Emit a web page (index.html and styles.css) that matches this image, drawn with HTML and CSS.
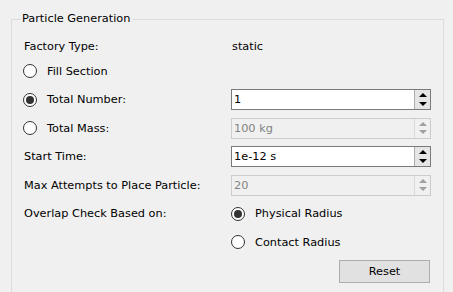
FILE: index.html
```html
<!DOCTYPE html>
<html>
<head>
  <link rel="stylesheet" href="styles.css">
</head>
<body>
  <fieldset class="group">
    <legend>Particle Generation</legend>

    <div class="rows">
      <div class="row first">
        <span class="label">Factory Type:</span>
        <span class="value">static</span>
      </div>

      <div class="row">
        <label class="radio"><span class="dot"></span>Fill Section</label>
      </div>

      <div class="row">
        <label class="radio"><span class="dot checked"></span>Total Number:</label>
        <div class="spin">
          <span class="spin-text">1</span>
          <span class="spin-btns"><span class="up"></span><span class="down"></span></span>
        </div>
      </div>

      <div class="row">
        <label class="radio"><span class="dot"></span>Total Mass:</label>
        <div class="spin disabled">
          <span class="spin-text">100 kg</span>
          <span class="spin-btns"><span class="up"></span><span class="down"></span></span>
        </div>
      </div>

      <div class="row">
        <span class="label">Start Time:</span>
        <div class="spin">
          <span class="spin-text">1e-12 s</span>
          <span class="spin-btns"><span class="up"></span><span class="down"></span></span>
        </div>
      </div>

      <div class="row">
        <span class="label">Max Attempts to Place Particle:</span>
        <div class="spin disabled">
          <span class="spin-text">20</span>
          <span class="spin-btns"><span class="up"></span><span class="down"></span></span>
        </div>
      </div>

      <div class="row">
        <span class="label">Overlap Check Based on:</span>
        <label class="radio"><span class="dot checked"></span>Physical Radius</label>
      </div>

      <div class="row">
        <span></span>
        <label class="radio"><span class="dot"></span>Contact Radius</label>
      </div>

      <div class="row">
        <span></span>
        <div class="actions">
          <button class="btn">Reset</button>
        </div>
      </div>
    </div>
  </fieldset>
</body>
</html>
```

FILE: styles.css
```css
* {
  margin: 0;
  padding: 0;
  box-sizing: border-box;
}

body {
  background: #f0f0f0;
  font-family: "DejaVu Sans", sans-serif;
  font-size: 11.3px;
  color: #000;
  overflow: hidden;
  height: 292px;
}

/* Group box */
.group {
  margin: 12px 0 0 11px;
  width: 433px;
  height: 280px;
  border: 1px solid #dcdcdc;
  border-bottom: none;
  padding: 0 0 0 11px;
}

.group legend {
  margin-left: -2px;
  padding: 0 3px 0 1px;
  line-height: 14px;
}

.rows {
  display: flex;
  flex-direction: column;
  gap: 6.5px;
  padding-top: 9px;
}

.row {
  display: grid;
  grid-template-columns: 208px 200px;
  height: 22px;
  align-items: center;
}

.row.first {
  margin-bottom: -3.5px;
}

.label {
  padding-left: 1px;
}

.value {
  padding-left: 1px;
}

/* Radio buttons */
.radio {
  display: flex;
  align-items: center;
  gap: 10px;
}

.dot {
  width: 14px;
  height: 14px;
  border: 1px solid #333;
  border-radius: 50%;
  background: #fff;
  display: flex;
  align-items: center;
  justify-content: center;
}

.dot.checked::after {
  content: "";
  width: 8px;
  height: 8px;
  border-radius: 50%;
  background: #333;
}

/* Spin boxes */
.spin {
  height: 21px;
  border: 1px solid #7a7a7a;
  background: #fff;
  display: flex;
  align-items: center;
  justify-content: space-between;
}

.spin-text {
  padding-left: 2px;
}

.spin-btns {
  width: 16px;
  height: 19px;
  border-left: 1px solid #adadad;
  display: flex;
  flex-direction: column;
  background: #e5e5e5;
  padding: 1px 0;
}

.spin-btns span {
  flex: 1;
  display: flex;
  align-items: center;
  justify-content: center;
}

.spin-btns .up::after {
  content: "";
  border-left: 4px solid transparent;
  border-right: 4px solid transparent;
  border-bottom: 4px solid #000;
}

.spin-btns .down::after {
  content: "";
  border-left: 4px solid transparent;
  border-right: 4px solid transparent;
  border-top: 4px solid #000;
}

.spin.disabled {
  border-color: #cccccc;
  background: #f0f0f0;
  color: #838383;
}

.spin.disabled .spin-btns {
  border-left-color: #dadada;
  background: #f0f0f0;
}

.spin.disabled .up::after {
  border-bottom-color: #a0a0a0;
}

.spin.disabled .down::after {
  border-top-color: #a0a0a0;
}

/* Button */
.actions {
  display: flex;
  justify-content: flex-end;
}

.btn {
  width: 91px;
  height: 23px;
  border: 1px solid #adadad;
  background: #e1e1e1;
  font-family: inherit;
  font-size: 11.3px;
  color: #000;
  margin-right: 1px;
}
```
